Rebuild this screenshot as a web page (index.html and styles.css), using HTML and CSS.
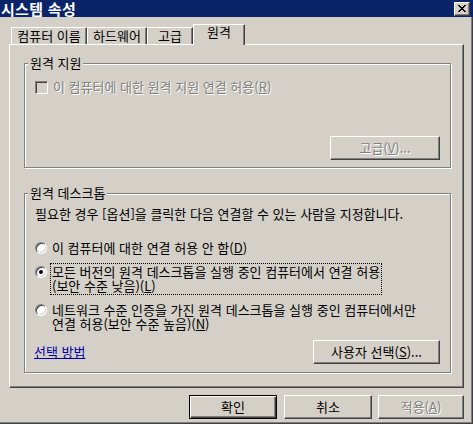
FILE: index.html
```html
<!DOCTYPE html>
<html lang="ko">
<head>
<meta charset="utf-8">
<title>시스템 속성</title>
<link rel="stylesheet" href="styles.css">
</head>
<body>
<div class="window">
  <div class="titlebar">
    <span class="title">시스템 속성</span>
    <span class="close-btn">
      <svg width="8" height="7" viewBox="0 0 8 7" shape-rendering="crispEdges">
        <path d="M0 0h2v1h-2z M6 0h2v1h-2z M1 1h2v1h-2z M5 1h2v1h-2z M2 2h4v1h-4z M3 3h2v1h-2z M2 4h4v1h-4z M1 5h2v1h-2z M5 5h2v1h-2z M0 6h2v1h-2z M6 6h2v1h-2z" fill="#000"/>
      </svg>
    </span>
  </div>
  <div class="content">
    <div class="tabstrip">
      <div class="tab tab-name">컴퓨터 이름</div>
      <div class="tab tab-hw">하드웨어</div>
      <div class="tab tab-adv">고급</div>
      <div class="tab tab-sel">원격</div>
    </div>
    <div class="panel">
      <div class="group group-assist">
        <div class="glabel">원격 지원</div>
        <div class="check-row disabled">
          <span class="checkbox"></span>
          <span class="ctext">이 컴퓨터에 대한 원격 지원 연결 허용(<u>R</u>)</span>
        </div>
        <div class="btn btn-adv disabled">고급(<u>V</u>)...</div>
      </div>
      <div class="group group-rdp">
        <div class="glabel">원격 데스크톱</div>
        <p class="desc">필요한 경우 [옵션]을 클릭한 다음 연결할 수 있는 사람을 지정합니다.</p>
        <div class="radio-row radio-1">
          <span class="radio"></span>
          <span class="rtext">이 컴퓨터에 대한 연결 허용 안 함(<u>D</u>)</span>
        </div>
        <div class="radio-row radio-2">
          <span class="radio checked"></span>
          <span class="rtext focus">모든 버전의 원격 데스크톱을 실행 중인 컴퓨터에서 연결 허용<br>(보안 수준 낮음)(<u>L</u>)</span>
        </div>
        <div class="radio-row radio-3">
          <span class="radio"></span>
          <span class="rtext">네트워크 수준 인증을 가진 원격 데스크톱을 실행 중인 컴퓨터에서만<br>연결 허용(보안 수준 높음)(<u>N</u>)</span>
        </div>
        <div class="bottom-row">
          <a class="link" href="#">선택 방법</a>
          <div class="btn btn-users">사용자 선택(<u>S</u>)...</div>
        </div>
      </div>
    </div>
    <div class="buttons">
      <div class="btn btn-ok default">확인</div>
      <div class="btn btn-cancel">취소</div>
      <div class="btn btn-apply disabled">적용(<u>A</u>)</div>
    </div>
  </div>
</div>
</body>
</html>
```
FILE: styles.css
```css
* { box-sizing: border-box; }
html, body { margin: 0; padding: 0; background: #d4d0c8; }
body {
  font-family: "Noto Sans CJK KR", "Noto Sans", sans-serif;
  font-size: 13px;
  line-height: 14px;
  color: #000;
}
.window {
  width: 473px;
  height: 424px;
  background: #d4d0c8;
  overflow: hidden;
  display: flex;
  flex-direction: column;
}
.titlebar {
  height: 17px;
  background: #0a246a;
  display: flex;
  align-items: center;
  justify-content: space-between;
  padding: 0 3px 0 1px;
  flex: none;
}
.title {
  color: #fff;
  font-weight: bold;
  font-size: 15px;
  line-height: 16px;
  letter-spacing: 0.3px;
}
.close-btn {
  width: 16px;
  height: 14px;
  background: #d4d0c8;
  border-top: 1px solid #fff;
  border-left: 1px solid #fff;
  border-right: 1px solid #404040;
  border-bottom: 1px solid #404040;
  box-shadow: inset -1px -1px 0 #808080;
  display: flex;
  align-items: center;
  justify-content: center;
  padding-right: 1px;
}
.close-btn svg { display: block; }
.content {
  flex: 1;
  border-right: 1px solid #404040;
  border-bottom: 1px solid #404040;
  box-shadow: inset -1px -1px 0 #808080;
}
.tabstrip {
  display: flex;
  align-items: flex-end;
  height: 20px;
  margin-top: 7px;
  padding-left: 11px;
}
.tab {
  height: 17px;
  border-top: 1px solid #fff;
  border-left: 1px solid #fff;
  border-right: 1px solid #404040;
  box-shadow: inset -1px 0 0 #808080;
  text-align: center;
  padding-top: 1px;
  background: #d4d0c8;
  white-space: nowrap;
}
.tab-name { width: 76px; }
.tab-hw { width: 60px; }
.tab-adv { width: 46px; }
.tab-sel {
  width: 52px;
  height: 21px;
  margin-bottom: -1px;
  padding-top: 0;
  position: relative;
  z-index: 1;
}
.panel {
  margin-left: 9px;
  width: 455px;
  height: 344px;
  border-top: 1px solid #fff;
  border-left: 1px solid #fff;
  border-right: 1px solid #404040;
  border-bottom: 1px solid #404040;
  box-shadow: inset -1px -1px 0 #808080;
  padding: 18px 12px 0 14px;
}
.group {
  border: 1px solid #808080;
  box-shadow: inset 1px 1px 0 #fff, 1px 1px 0 #fff;
}
.group-assist { height: 105px; display: flex; flex-direction: column; }
.group-rdp { height: 180px; margin-top: 25px; }
.glabel {
  margin-top: -8px;
  margin-left: 3px;
  padding: 0 2px;
  width: fit-content;
  background: #d4d0c8;
  position: relative;
}
.disabled { color: #808080; text-shadow: 1px 1px 0 #fff; }
.check-row {
  display: flex;
  align-items: center;
  margin-top: 10px;
  margin-left: 10px;
  height: 14px;
}
.checkbox {
  width: 13px;
  height: 13px;
  flex: none;
  border-top: 1px solid #808080;
  border-left: 1px solid #808080;
  border-right: 1px solid #fff;
  border-bottom: 1px solid #fff;
  box-shadow: inset 1px 1px 0 #404040, inset -1px -1px 0 #d4d0c8;
  background: #d4d0c8;
  margin-right: 5px;
}
.btn {
  height: 24px;
  display: flex;
  align-items: center;
  justify-content: center;
  border-top: 1px solid #fff;
  border-left: 1px solid #fff;
  border-right: 1px solid #404040;
  border-bottom: 1px solid #404040;
  box-shadow: inset -1px -1px 0 #808080;
  background: #d4d0c8;
  white-space: nowrap;
  padding-bottom: 1px;
}
.btn-adv {
  width: 110px;
  align-self: flex-end;
  margin-top: 42px;
  margin-right: 10px;
}
.desc {
  margin: 7px 0 0 10px;
}
.radio-row {
  display: flex;
  align-items: flex-start;
  margin-left: 10px;
}
.radio-1 { margin-top: 20px; align-items: center; height: 14px; }
.radio-2 { margin-top: 9px; }
.radio-3 { margin-top: 9px; }
.radio {
  width: 12px;
  height: 12px;
  flex: none;
  border-radius: 50%;
  border: 1px solid;
  border-color: #808080 #fff #fff #808080;
  box-shadow: inset 1px 1px 0 #404040, inset -1px -1px 0 #d4d0c8;
  background: #fff;
  margin-right: 5px;
  position: relative;
}
.radio-2 .radio { margin-top: 2px; }
.radio-3 .radio { margin-top: 1px; }
.radio.checked::after {
  content: "";
  position: absolute;
  left: 3px;
  top: 3px;
  width: 4px;
  height: 4px;
  border-radius: 50%;
  background: #000;
}
.rtext { white-space: nowrap; }
.focus {
  outline: 1px dotted #000;
  padding: 1px 1px;
  margin-left: -1px;
}
.bottom-row {
  display: flex;
  align-items: center;
  justify-content: space-between;
  margin-top: 9px;
  margin-left: 9px;
  margin-right: 10px;
}
.link {
  color: #0000a8;
  text-decoration: underline;
}
.btn-users { width: 127px; }
.buttons {
  display: flex;
  justify-content: flex-end;
  margin-top: 7px;
  margin-left: 9px;
  width: 455px;
}
.btn-ok { width: 88px; }
.btn-cancel { width: 88px; margin-left: 7px; }
.btn-apply { width: 86px; margin-left: 6px; }
.btn.default {
  border: 1px solid #000;
  box-shadow: inset 1px 1px 0 #fff, inset -1px -1px 0 #404040, inset -2px -2px 0 #808080;
}
u { text-decoration: underline; }
```
